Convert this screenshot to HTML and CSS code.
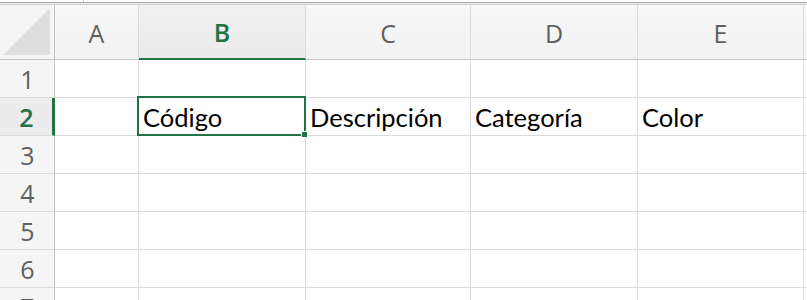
FILE: index.html
```html
<!DOCTYPE html>
<html lang="es">
<head>
    <meta charset="UTF-8">
    <meta name="viewport" content="width=device-width, initial-scale=1.0">
    <title>Hoja1</title>
    <link rel="stylesheet" href="styles.css">
</head>
<body>

    <div class="topbar"><span class="tick"></span></div>

    <div class="sheet">
        <!-- column headers -->
        <div class="corner"><span class="corner-tri"></span></div>
        <div class="colhead">A</div>
        <div class="colhead selected">B</div>
        <div class="colhead">C</div>
        <div class="colhead">D</div>
        <div class="colhead">E</div>
        <div class="colhead"></div>

        <!-- row 1 -->
        <div class="rowhead">1</div>
        <div class="cell"></div>
        <div class="cell"></div>
        <div class="cell"></div>
        <div class="cell"></div>
        <div class="cell"></div>
        <div class="cell"></div>

        <!-- row 2 -->
        <div class="rowhead selected">2</div>
        <div class="cell"></div>
        <div class="cell active">Código<span class="selection"><span class="handle"></span></span></div>
        <div class="cell">Descripción</div>
        <div class="cell">Categoría</div>
        <div class="cell">Color</div>
        <div class="cell"></div>

        <!-- row 3 -->
        <div class="rowhead">3</div>
        <div class="cell"></div>
        <div class="cell"></div>
        <div class="cell"></div>
        <div class="cell"></div>
        <div class="cell"></div>
        <div class="cell"></div>

        <!-- row 4 -->
        <div class="rowhead">4</div>
        <div class="cell"></div>
        <div class="cell"></div>
        <div class="cell"></div>
        <div class="cell"></div>
        <div class="cell"></div>
        <div class="cell"></div>

        <!-- row 5 -->
        <div class="rowhead">5</div>
        <div class="cell"></div>
        <div class="cell"></div>
        <div class="cell"></div>
        <div class="cell"></div>
        <div class="cell"></div>
        <div class="cell"></div>

        <!-- row 6 -->
        <div class="rowhead">6</div>
        <div class="cell"></div>
        <div class="cell"></div>
        <div class="cell"></div>
        <div class="cell"></div>
        <div class="cell"></div>
        <div class="cell"></div>

        <!-- row 7, only its top shows -->
        <div class="rowhead">7</div>
        <div class="cell"></div>
        <div class="cell"></div>
        <div class="cell"></div>
        <div class="cell"></div>
        <div class="cell"></div>
        <div class="cell"></div>
    </div>

</body>
</html>
```

FILE: styles.css
```css
body {
    margin: 0;
    background-color: #fff;
    overflow: hidden;
    height: 300px;
}

.topbar {
    position: relative;
    height: 2px;
    border-bottom: 1px solid #a9a9a9;
}

    .topbar .tick {
        position: absolute;
        left: 83px;
        top: 0;
        width: 1px;
        height: 2px;
        background-color: #c4c4c4;
    }

.sheet {
    display: grid;
    grid-template-columns: 55px 84px 167px 165px 167px 166px 1fr;
    grid-template-rows: 56px repeat(7, 38px);
    border-top: 1px solid #ececec;
    font-family: Lato, "Open Sans", sans-serif;
}

.corner {
    position: relative;
    background-color: #f5f5f5;
    border-right: 1px solid #c3c3c3;
    border-bottom: 1px solid #c3c3c3;
    border-top: 1px solid #d0d0d0;
}

    .corner .corner-tri {
        position: absolute;
        right: 4px;
        bottom: 4px;
        width: 0;
        height: 0;
        border-left: 47px solid transparent;
        border-bottom: 47px solid #dedede;
    }

.colhead {
    display: flex;
    align-items: center;
    justify-content: center;
    background: linear-gradient(#f7f7f7, #f2f2f2);
    border-right: 1px solid #dadada;
    border-bottom: 1px solid #c3c3c3;
    border-top: 1px solid #d0d0d0;
    box-sizing: border-box;
    color: #5f5f5f;
    font-family: "Open Sans", sans-serif;
    font-size: 25px;
    padding-top: 1px;
}

    .colhead.selected {
        background: linear-gradient(#f1f1f1, #ebebeb);
        border-bottom: 2px solid #217346;
        color: #217346;
        font-weight: 600;
    }

.rowhead {
    display: flex;
    align-items: center;
    justify-content: center;
    background-color: #f5f5f5;
    border-right: 1px solid #c3c3c3;
    border-bottom: 1px solid #dadada;
    box-sizing: border-box;
    color: #5f5f5f;
    font-family: "Open Sans", sans-serif;
    font-size: 25px;
    padding-left: 1px;
}

    .rowhead.selected {
        background-color: #ececec;
        border-right: 3px solid #217346;
        color: #217346;
        font-weight: 600;
    }

.cell {
    display: flex;
    align-items: center;
    padding: 1px 0 0 4px;
    border-right: 1px solid #dadada;
    border-bottom: 1px solid #dadada;
    box-sizing: border-box;
    color: #000;
    font-size: 25.5px;
    white-space: nowrap;
}

.active {
    position: relative;
}

    .active .selection {
        position: absolute;
        left: -2px;
        top: -2px;
        right: -1px;
        bottom: -1px;
        border: 2px solid #217346;
    }

    .active .handle {
        position: absolute;
        right: -4px;
        bottom: -4px;
        width: 5px;
        height: 5px;
        background-color: #217346;
        border: 1px solid #fff;
    }
```
